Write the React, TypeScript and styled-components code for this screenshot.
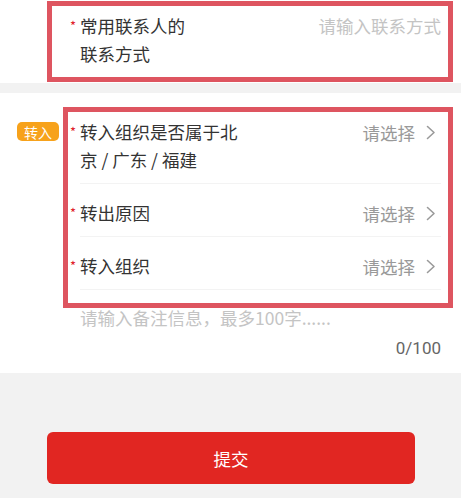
import React from "react";
import styled, { createGlobalStyle } from "styled-components";

const GlobalStyle = createGlobalStyle`
  html, body {
    margin: 0;
    padding: 0;
    background: #f2f2f2;
  }
  body {
    font-family: "Noto Sans CJK SC", "Noto Sans", sans-serif;
    color: #333;
  }
`;

const Page = styled.div`
  width: 461px;
  min-height: 498px;
  background: #f2f2f2;
  display: flex;
  flex-direction: column;
`;

const Section = styled.div<{ $mt?: number; $pt?: number; $pb?: number }>`
  position: relative;
  background: #fff;
  margin-top: ${(p) => p.$mt || 0}px;
  padding-top: ${(p) => p.$pt || 0}px;
  padding-bottom: ${(p) => p.$pb || 0}px;
  display: flex;
`;

// red annotation frame drawn over the form
const Highlight = styled.div<{ $top: number; $left: number; $w: number; $h: number }>`
  position: absolute;
  top: ${(p) => p.$top}px;
  left: ${(p) => p.$left}px;
  width: ${(p) => p.$w}px;
  height: ${(p) => p.$h}px;
  box-sizing: border-box;
  border: 5.5px solid #de5560;
  pointer-events: none;
`;

const BadgeCol = styled.div`
  width: 80px;
  padding-left: 17px;
  padding-top: 19px;
  box-sizing: border-box;
  flex-shrink: 0;
`;

const Badge = styled.div`
  display: flex;
  align-items: center;
  justify-content: center;
  width: 42px;
  height: 19px;
  border-radius: 5px;
  background: #f7a21b;
  color: #fff;
  font-size: 14px;
  line-height: 1;
`;

const FormCol = styled.div<{ $pl?: number }>`
  flex: 1;
  padding-left: ${(p) => p.$pl || 0}px;
  padding-right: 20px;
  display: flex;
  flex-direction: column;
`;

const Row = styled.div<{ $divider?: boolean; $pt?: number }>`
  display: flex;
  align-items: flex-start;
  justify-content: space-between;
  padding: ${(p) => (p.$pt ?? 15)}px 0 9px;
  border-bottom: ${(p) => (p.$divider ? "1px solid #f3f3f3" : "none")};
`;

const LabelWrap = styled.div<{ $w: number }>`
  display: flex;
  width: ${(p) => p.$w}px;
`;

const Star = styled.span`
  width: 10px;
  margin-left: -10px;
  color: #e0202a;
  font-size: 13px;
  line-height: 27px;
  flex-shrink: 0;
`;

const Label = styled.span`
  font-size: 17.5px;
  line-height: 28px;
  color: #333;
`;

const Placeholder = styled.span`
  font-size: 17.5px;
  line-height: 28px;
  color: #c4c4c4;
`;

const Select = styled.div`
  display: flex;
  align-items: center;
  gap: 11px;
  height: 28px;
  padding-right: 5px;
  font-size: 17.5px;
  color: #999;
`;

const Remark = styled.div`
  display: flex;
  flex-direction: column;
  padding-top: 14px;
`;

const Counter = styled.div`
  align-self: flex-end;
  margin-top: 2px;
  font-family: "Roboto", "Noto Sans", sans-serif;
  font-size: 17px;
  line-height: 28px;
  color: #666;
`;

const Footer = styled.div`
  display: flex;
  justify-content: flex-start;
  padding: 59px 0 0 47px;
`;

const SubmitButton = styled.button`
  width: 368px;
  height: 52px;
  border: none;
  border-radius: 6px;
  background: #e12622;
  color: #fff;
  font-family: "Noto Sans CJK SC", sans-serif;
  font-size: 17.5px;
  cursor: pointer;
`;

const Chevron = () => (
  <svg width="10" height="15" viewBox="0 0 10 15" fill="none">
    <path d="M1.5 1.5 L8 7.5 L1.5 13.5" stroke="#9a9a9a" strokeWidth="1.6" strokeLinecap="round" strokeLinejoin="round" />
  </svg>
);

type SelectRowProps = { label: string; width: number; divider?: boolean };

const SelectRow = ({ label, width, divider }: SelectRowProps) => (
  <Row $divider={divider}>
    <LabelWrap $w={width}>
      <Star>*</Star>
      <Label>{label}</Label>
    </LabelWrap>
    <Select>
      请选择
      <Chevron />
    </Select>
  </Row>
);

export default function App() {
  return (
    <Page>
      <GlobalStyle />
      <Section $pt={0} $pb={6}>
        <FormCol $pl={80}>
          <Row $pt={12}>
            <LabelWrap $w={120}>
              <Star>*</Star>
              <Label>常用联系人的联系方式</Label>
            </LabelWrap>
            <Placeholder>请输入联系方式</Placeholder>
          </Row>
        </FormCol>
        <Highlight $top={1} $left={47} $w={406} $h={81} />
      </Section>

      <Section $mt={10} $pt={10} $pb={11}>
        <BadgeCol>
          <Badge>转入</Badge>
        </BadgeCol>
        <FormCol>
          <SelectRow label="转入组织是否属于北京 / 广东 / 福建" width={165} divider />
          <SelectRow label="转出原因" width={165} divider />
          <SelectRow label="转入组织" width={165} divider />
          <Remark>
            <Placeholder>请输入备注信息，最多100字......</Placeholder>
            <Counter>0/100</Counter>
          </Remark>
        </FormCol>
        <Highlight $top={14} $left={63} $w={390} $h={201} />
      </Section>

      <Footer>
        <SubmitButton>提交</SubmitButton>
      </Footer>
    </Page>
  );
}
